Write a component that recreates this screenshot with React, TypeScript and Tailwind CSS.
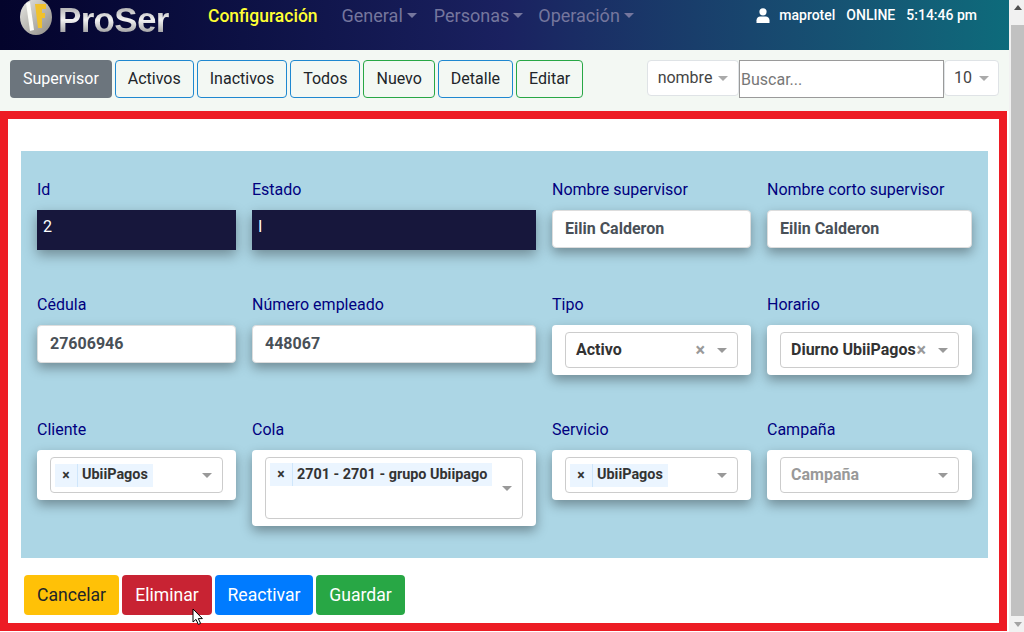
import { ReactNode } from "react";

const font = "font-['Roboto',sans-serif]";

function Caret({ className = "" }: { className?: string }) {
  return (
    <span
      className={`inline-block h-0 w-0 border-x-[5px] border-t-[5px] border-x-transparent ${className}`}
    />
  );
}

function NavMenu({ label, className = "" }: { label: string; className?: string }) {
  return (
    <span className={`flex items-center gap-[4px] pb-[2px] text-[18px] text-[#75769d] ${className}`}>
      {label}
      <Caret className="border-t-[#75769d]" />
    </span>
  );
}

function Logo() {
  return (
    <div className="flex h-[40px] w-[188px] items-start pl-[18px]">
      <svg width="36" height="40" viewBox="0 0 36 40" className="mt-[-3px] shrink-0">
        <defs>
          <linearGradient id="ball" x1="0" y1="0" x2="1" y2="1">
            <stop offset="0" stopColor="#e8e8e4" />
            <stop offset="1" stopColor="#8d8a84" />
          </linearGradient>
        </defs>
        <ellipse cx="18" cy="20" rx="16" ry="18" fill="url(#ball)" />
        <path d="M8 6 L12 5 L16 33 L12 34 Z" fill="#fbfbf6" />
        <path d="M17 7 H28 V12 H24 V16 H27 V21 H24 V31 H20 Z" fill="#f0c12c" />
      </svg>
      <span className="ml-[4px] bg-gradient-to-b from-[#8e8e90] via-[#f2f2f2] to-[#77777a] bg-clip-text font-['Liberation_Sans',sans-serif] text-[35px] leading-[40px] font-bold tracking-[-0.7px] text-transparent">
        ProSer
      </span>
    </div>
  );
}

function Header() {
  return (
    <header
      className={`flex h-[50px] shrink-0 items-start bg-gradient-to-r from-[#04042c] via-[#1a2160] to-[#0d6b7b] ${font}`}
    >
      <Logo />
      <nav className="ml-[20px] flex h-[32px] items-center text-[17.5px]">
        <span className="mr-[24px] font-medium text-[#ffff33]">Configuración</span>
        <div className="flex gap-[17px]">
          <NavMenu label="General" />
          <NavMenu label="Personas" />
          <NavMenu label="Operación" className="ml-[-2px]" />
        </div>
      </nav>
      <div className="ml-auto mr-[32px] flex h-[30px] items-center text-[14px] font-medium text-white">
        <svg width="14" height="15" viewBox="0 0 14 15" fill="white" className="mr-[9px]">
          <circle cx="7" cy="3.8" r="3.6" />
          <path d="M0.5 15 V12.2 C0.5 9.8 2.4 8.4 4.2 8.4 H9.8 C11.6 8.4 13.5 9.8 13.5 12.2 V15 Z" />
        </svg>
        <span>maprotel</span>
        <span className="ml-[11px]">ONLINE</span>
        <span className="ml-[11px]">5:14:46 pm</span>
      </div>
    </header>
  );
}

function ToolButton({ label, green }: { label: string; green?: boolean }) {
  return (
    <button
      className={`h-[38px] rounded-[4px] border px-[12px] text-[16px] text-[#212529] ${
        green ? "border-[#28a745]" : "border-[#1f88d0]"
      }`}
    >
      {label}
    </button>
  );
}

function Toolbar() {
  return (
    <div className={`flex h-[61px] shrink-0 items-start bg-[#f3f8f3] pt-[10px] pl-[10px] ${font}`}>
      <div className="flex gap-[3px]">
        <button className="h-[38px] rounded-[4px] bg-[#6c757d] px-[13px] text-[16px] text-white">
          Supervisor
        </button>
        <ToolButton label="Activos" />
        <ToolButton label="Inactivos" />
        <ToolButton label="Todos" />
        <ToolButton label="Nuevo" green />
        <ToolButton label="Detalle" />
        <ToolButton label="Editar" green />
      </div>
      <div className="ml-auto mr-[10px] flex items-start">
        <div className="flex h-[36px] w-[92px] items-center justify-center gap-[6px] rounded-[4px] border border-[#dfe3e6] bg-white text-[16px] text-[#444]">
          nombre
          <Caret className="border-t-[#aaaaaa]" />
        </div>
        <input
          placeholder="Buscar..."
          className="h-[38px] w-[205px] border border-[#9a9a9a] bg-white px-[1px] text-[16px] outline-none placeholder:text-[#777]"
        />
        <div className="flex h-[36px] w-[55px] items-center justify-center gap-[7px] rounded-[4px] border border-[#dfe3e6] bg-white text-[16px] text-[#444]">
          10
          <Caret className="border-t-[#aaaaaa]" />
        </div>
      </div>
    </div>
  );
}

function Field({ label, children }: { label: string; children: ReactNode }) {
  return (
    <div className="flex flex-col">
      <label className="h-[24px] pt-[1px] text-[16px] leading-[24px] text-[#00007f]">{label}</label>
      <div className="mt-[9px]">{children}</div>
    </div>
  );
}

function DarkInput({ value }: { value: string }) {
  return (
    <input
      readOnly
      value={value}
      className="block h-[40px] w-full bg-[#17173c] px-[6px] pb-[8px] text-[16px] text-white shadow-[0_5px_12px_rgba(0,0,0,0.35)] outline-none"
    />
  );
}

function TextInput({ value }: { value: string }) {
  return (
    <input
      readOnly
      value={value}
      className="block h-[38px] w-full rounded-[4px] border border-[#dddddd] bg-white px-[12px] pb-[2px] text-[16px] font-bold text-[#495057] shadow-[0_5px_12px_rgba(0,0,0,0.35)] outline-none"
    />
  );
}

function Chip({ label }: { label: string }) {
  return (
    <span className="flex h-[23px] items-center bg-[#ebf5ff] text-[14.4px] font-bold text-[#333]">
      <span className="flex h-full w-[23px] items-center justify-center border-r border-[#cfe6fb] text-[14px]">
        ×
      </span>
      <span className="pr-[5px] pl-[4px] whitespace-nowrap">{label}</span>
    </span>
  );
}

function SelectBox({
  children,
  clear,
  tall,
}: {
  children: ReactNode;
  clear?: boolean;
  tall?: boolean;
}) {
  return (
    <div className="rounded-[4px] bg-white px-[13px] py-[7px] shadow-[0_5px_12px_rgba(0,0,0,0.35)]">
      <div
        className={`relative flex rounded-[4px] border border-[#cccccc] pl-[4px] ${
          tall ? "h-[62px] items-start pt-[5px]" : "h-[36px] items-center"
        }`}
      >
        {children}
        {clear && (
          <span className="absolute top-[7px] right-[32px] text-[18px] leading-[20px] font-bold text-[#999]">
            ×
          </span>
        )}
        <Caret className="absolute top-1/2 right-[10px] mt-[-2px] border-t-[#999]" />
      </div>
    </div>
  );
}

function FormPanel() {
  return (
    <div className="mt-[32px] mr-[11px] ml-[13px] grid grid-cols-[199px_284px_199px_205px] grid-rows-[73px_83px_auto] gap-x-4 gap-y-[42px] bg-[#acd6e5] px-4 pt-[26px] pb-8">
      <Field label="Id">
        <DarkInput value="2" />
      </Field>
      <Field label="Estado">
        <DarkInput value="I" />
      </Field>
      <Field label="Nombre supervisor">
        <TextInput value="Eilin Calderon" />
      </Field>
      <Field label="Nombre corto supervisor">
        <TextInput value="Eilin Calderon" />
      </Field>

      <Field label="Cédula">
        <TextInput value="27606946" />
      </Field>
      <Field label="Número empleado">
        <TextInput value="448067" />
      </Field>
      <Field label="Tipo">
        <SelectBox clear>
          <span className="pl-[6px] text-[16px] font-bold text-[#333]">Activo</span>
        </SelectBox>
      </Field>
      <Field label="Horario">
        <SelectBox clear>
          <span className="pl-[6px] text-[16px] font-bold whitespace-nowrap text-[#333]">
            Diurno UbiiPagos
          </span>
        </SelectBox>
      </Field>

      <Field label="Cliente">
        <SelectBox>
          <Chip label="UbiiPagos" />
        </SelectBox>
      </Field>
      <Field label="Cola">
        <SelectBox tall>
          <Chip label="2701 - 2701 - grupo Ubiipago" />
        </SelectBox>
      </Field>
      <Field label="Servicio">
        <SelectBox>
          <Chip label="UbiiPagos" />
        </SelectBox>
      </Field>
      <Field label="Campaña">
        <SelectBox>
          <span className="pl-[6px] text-[16px] font-bold text-[#999]">Campaña</span>
        </SelectBox>
      </Field>
    </div>
  );
}

function Actions() {
  return (
    <div className="relative mt-[17px] ml-[16px] flex gap-[3px] text-[17.6px]">
      <button className="h-[40px] w-[95px] rounded-[4px] bg-[#ffc107] text-[#212529]">Cancelar</button>
      <button className="h-[40px] w-[90px] rounded-[4px] bg-[#c82333] text-white">Eliminar</button>
      <button className="h-[40px] w-[98px] rounded-[4px] bg-[#007bff] text-white">Reactivar</button>
      <button className="h-[40px] w-[89px] rounded-[4px] bg-[#28a745] text-white">Guardar</button>
      {/* mouse pointer */}
      <svg width="13" height="18" viewBox="0 0 13 18" className="absolute top-[33px] left-[168px]">
        <path
          d="M1 1 V14 L4 11.4 L6.3 16.4 L8.6 15.4 L6.3 10.6 H10.4 Z"
          fill="white"
          stroke="black"
          strokeWidth="1"
        />
      </svg>
    </div>
  );
}

function Scrollbar() {
  return (
    <div className="flex w-[15px] shrink-0 flex-col bg-[#f1f1f1] pl-[2px]">
      <div className="flex h-[25px] items-start justify-center pt-[5px]">
        <span className="h-0 w-0 border-x-[4px] border-b-[5px] border-x-transparent border-b-[#505050]" />
      </div>
      <div className="h-[591px] bg-[#c1c1c1]" />
      <div className="flex flex-1 items-center justify-center">
        <Caret className="!border-x-[4px] border-t-[#a3a3a3]" />
      </div>
    </div>
  );
}

export default function App() {
  return (
    <div className={`flex h-[632px] w-[1024px] overflow-hidden bg-white ${font}`}>
      <div className="flex w-[1009px] shrink-0 flex-col">
        <Header />
        <Toolbar />
        <main className="h-[520px] w-[1007px] border-8 border-[#ed1c24] bg-white">
          <FormPanel />
          <Actions />
        </main>
      </div>
      <Scrollbar />
    </div>
  );
}
